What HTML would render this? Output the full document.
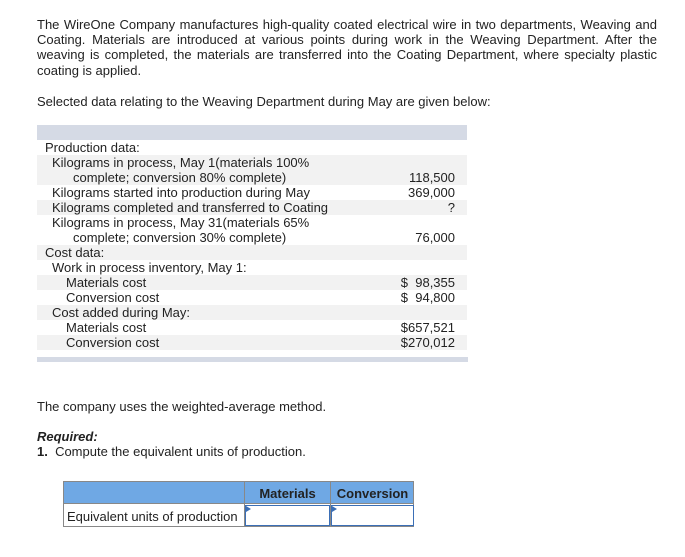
<!DOCTYPE html>
<html><head><style>
body{margin:0;width:685px;height:557px;background:#fff;font-family:"Liberation Sans",Arial,sans-serif;font-size:13px;color:#222;position:relative;overflow:hidden}
.p{position:absolute;left:37px;width:620px;line-height:15.3px;white-space:nowrap}
.j{text-align:justify;text-align-last:justify;white-space:normal}
.r{position:absolute;left:37px;width:430px;height:15px;line-height:15px}
.g{background:#f2f2f2}
.t{position:absolute;white-space:nowrap}
.n{position:absolute;right:12px;top:0;text-align:right;white-space:pre}
</style></head><body>
<div class="p j" style="top:17px">The WireOne Company manufactures high-quality coated electrical wire in two departments, Weaving and</div>
<div class="p j" style="top:32px">Coating. Materials are introduced at various points during work in the Weaving Department. After the</div>
<div class="p j" style="top:47px">weaving is completed, the materials are transferred into the Coating Department, where specialty plastic</div>
<div class="p" style="top:63px">coating is applied.</div>
<div class="p" style="top:94px">Selected data relating to the Weaving Department during May are given below:</div>
<div style="position:absolute;left:37px;top:125px;width:430px;height:15px;background:#d5dae5"></div>
<div class="r" style="top:140px"><span class="t" style="left:8px">Production data:</span></div>
<div class="r g" style="top:155px;height:30px"><span class="t" style="left:15px">Kilograms in process, May 1(materials 100%</span><span class="t" style="left:36px;top:15px">complete; conversion 80% complete)</span><span class="n" style="top:15px">118,500</span></div>
<div class="r" style="top:185px"><span class="t" style="left:15px">Kilograms started into production during May</span><span class="n">369,000</span></div>
<div class="r g" style="top:200px"><span class="t" style="left:15px">Kilograms completed and transferred to Coating</span><span class="n">?</span></div>
<div class="r" style="top:215px;height:30px"><span class="t" style="left:15px">Kilograms in process, May 31(materials 65%</span><span class="t" style="left:36px;top:15px">complete; conversion 30% complete)</span><span class="n" style="top:15px">76,000</span></div>
<div class="r g" style="top:245px"><span class="t" style="left:8px">Cost data:</span></div>
<div class="r" style="top:260px"><span class="t" style="left:15px">Work in process inventory, May 1:</span></div>
<div class="r g" style="top:275px"><span class="t" style="left:29px">Materials cost</span><span class="n">$  98,355</span></div>
<div class="r" style="top:290px"><span class="t" style="left:29px">Conversion cost</span><span class="n">$  94,800</span></div>
<div class="r g" style="top:305px"><span class="t" style="left:15px">Cost added during May:</span></div>
<div class="r" style="top:320px"><span class="t" style="left:29px">Materials cost</span><span class="n">$657,521</span></div>
<div class="r g" style="top:335px"><span class="t" style="left:29px">Conversion cost</span><span class="n">$270,012</span></div>
<div style="position:absolute;left:37px;top:357px;width:431px;height:5px;background:#d5dae5"></div>
<div class="p" style="top:399px">The company uses the weighted-average method.</div>
<div class="p" style="top:429px;font-weight:bold;font-style:italic">Required:</div>
<div class="p" style="top:444px"><b>1.</b>&nbsp; Compute the equivalent units of production.</div>
<div style="position:absolute;left:63px;top:481px;width:351px;height:46px;border:1px solid #888;box-sizing:border-box"></div>
<div style="position:absolute;left:64px;top:482px;width:349px;height:21px;background:#6fa8e4"></div>
<div style="position:absolute;left:244px;top:481px;width:1px;height:46px;background:#888"></div>
<div style="position:absolute;left:330px;top:481px;width:1px;height:46px;background:#888"></div>
<div style="position:absolute;left:64px;top:503px;width:349px;height:1px;background:#888"></div>
<div class="t" style="left:245px;width:85px;top:486px;text-align:center;font-weight:bold">Materials</div>
<div class="t" style="left:331px;width:83px;top:486px;text-align:center;font-weight:bold">Conversion</div>
<div class="t" style="left:67px;top:509px">Equivalent units of production</div>
<div style="position:absolute;left:245px;top:505px;width:85px;height:21px;border:1px solid #3b6fb6;box-sizing:border-box"></div>
<div style="position:absolute;left:331px;top:505px;width:83px;height:21px;border:1px solid #3b6fb6;box-sizing:border-box"></div>
<div style="position:absolute;left:246px;top:506px;width:0;height:0;border-left:5px solid #3b6fb6;border-top:3px solid transparent;border-bottom:3px solid transparent"></div>
<div style="position:absolute;left:332px;top:506px;width:0;height:0;border-left:5px solid #3b6fb6;border-top:3px solid transparent;border-bottom:3px solid transparent"></div>
</body></html>
